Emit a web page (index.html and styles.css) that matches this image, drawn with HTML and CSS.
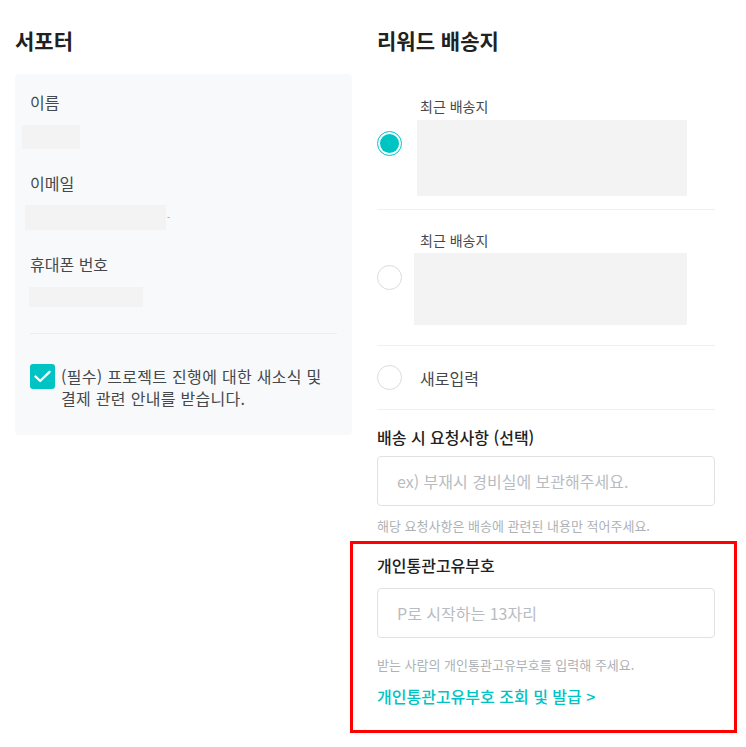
FILE: index.html
```html
<!DOCTYPE html>
<html lang="ko">
<head>
<meta charset="utf-8">
<link rel="stylesheet" href="styles.css">
</head>
<body>
<div class="page">
  <section class="col col-left">
    <h2 class="title">서포터</h2>
    <div class="info-box">
      <div class="field-label">이름</div>
      <div class="redact redact-name"></div>
      <div class="field-label gap">이메일</div>
      <div class="email-row"><div class="redact redact-email"></div><span class="tick">-</span></div>
      <div class="field-label gap">휴대폰 번호</div>
      <div class="redact redact-phone"></div>
      <hr class="divider">
      <label class="agree">
        <span class="checkbox">
          <svg width="17" height="13" viewBox="0 0 17 13"><path d="M1.5 6.5 L6.2 11 L15.5 1.8" fill="none" stroke="#fff" stroke-width="2.4" stroke-linecap="round" stroke-linejoin="round"/></svg>
        </span>
        <span class="agree-text">(필수) 프로젝트 진행에 대한 새소식 및<br>결제 관련 안내를 받습니다.</span>
      </label>
    </div>
  </section>

  <section class="col col-right">
    <h2 class="title">리워드 배송지</h2>
    <div class="addr-row row-1">
      <span class="radio checked"><span class="dot"></span></span>
      <div class="addr-content">
        <div class="addr-label">최근 배송지</div>
        <div class="redact redact-addr1"></div>
      </div>
    </div>
    <div class="addr-row row-2">
      <span class="radio"></span>
      <div class="addr-content">
        <div class="addr-label">최근 배송지</div>
        <div class="redact redact-addr2"></div>
      </div>
    </div>
    <div class="addr-row row-new">
      <span class="radio"></span>
      <span class="new-text">새로입력</span>
    </div>

    <div class="form-label req-label">배송 시 요청사항 (선택)</div>
    <div class="input"><span class="placeholder">ex) 부재시 경비실에 보관해주세요.</span></div>
    <div class="helper">해당 요청사항은 배송에 관련된 내용만 적어주세요.</div>

    <div class="customs">
      <div class="form-label">개인통관고유부호</div>
      <div class="input customs-input"><span class="placeholder">P로 시작하는 13자리</span></div>
      <div class="helper customs-helper">받는 사람의 개인통관고유부호를 입력해 주세요.</div>
      <a class="link">개인통관고유부호 조회 및 발급 &gt;</a>
    </div>
  </section>
</div>
</body>
</html>
```

FILE: styles.css
```css
* { box-sizing: border-box; }
html, body { margin: 0; padding: 0; background: #fff; }
body {
  font-family: "Noto Sans CJK KR", "Noto Sans", sans-serif;
  color: #44484b;
  width: 746px;
  height: 747px;
  overflow: hidden;
}
.page {
  display: flex;
  gap: 25px;
  padding: 26px 0 0 15px;
}
.col-left { width: 337px; }
.col-right { width: 338px; }

.title {
  margin: 0;
  font-size: 21px;
  line-height: 28px;
  font-weight: 700;
  color: #212121;
}

/* left */
.info-box {
  margin-top: 20px;
  background: #f8f9fb;
  border-radius: 4px;
  padding: 17px 15px 26px;
}
.field-label {
  font-size: 16px;
  line-height: 22px;
  color: #44484b;
}
.field-label.gap { margin-top: 23px; }
.redact { background: #f3f3f3; }
.redact-name { margin: 12px 0 0 -8px; width: 58px; height: 24px; }
.email-row { display: flex; align-items: center; margin: 11px 0 0 -5px; }
.redact-email { width: 141px; height: 25px; }
.tick { font-size: 9px; line-height: 10px; color: #90959a; margin-left: 1px; }
.redact-phone { margin: 12px 0 0 -1px; width: 114px; height: 20px; }
.divider {
  border: 0;
  border-top: 1px solid #eceef0;
  margin: 26px 0 0;
}
.agree {
  display: flex;
  align-items: flex-start;
  gap: 6px;
  margin-top: 30px;
}
.checkbox {
  flex: none;
  width: 25px;
  height: 25px;
  border-radius: 3px;
  background: #00c4c4;
  display: flex;
  align-items: center;
  justify-content: center;
}
.agree-text {
  margin-top: 1px;
  font-size: 16px;
  line-height: 22px;
  letter-spacing: 0.3px;
  color: #44484b;
}

/* right */
.addr-row {
  display: flex;
  align-items: center;
  border-bottom: 1px solid #f0f0f0;
}
.row-1 { margin-top: 22px; padding: 20px 0 13px; }
.row-1 .radio { margin-bottom: 6px; }
.row-2 { padding: 20px 0 20px; }
.row-new { height: 64px; }
.radio {
  flex: none;
  width: 25px;
  height: 25px;
  border-radius: 50%;
  border: 1px solid #dcdcdc;
  background: #fff;
  display: flex;
  align-items: center;
  justify-content: center;
}
.radio.checked { border-color: #00c4c4; }
.radio .dot {
  width: 19px;
  height: 19px;
  border-radius: 50%;
  background: #00c4c4;
}
.addr-content { margin-left: 18px; }
.addr-label {
  font-size: 14px;
  line-height: 20px;
  color: #44484b;
}
.redact-addr1 { margin: 4px 0 0 -3px; width: 270px; height: 76px; }
.redact-addr2 { margin: 3px 0 0 -6px; width: 273px; height: 72px; }
.new-text {
  margin-left: 18px;
  font-size: 16px;
  line-height: 22px;
  color: #44484b;
}

.form-label {
  font-size: 16px;
  line-height: 22px;
  font-weight: 500;
  color: #212121;
}
.req-label { margin-top: 16px; }
.input {
  margin-top: 8px;
  height: 50px;
  border: 1px solid #dfe2e5;
  border-radius: 4px;
  display: flex;
  align-items: center;
  padding-left: 19px;
}
.placeholder {
  font-size: 16px;
  color: #b8bcc0;
}
.helper {
  margin-top: 11px;
  font-size: 13px;
  line-height: 18px;
  color: #adb1b5;
}

.customs {
  margin: 6px -22px 0 -27px;
  border: 3px solid #ff0000;
  padding: 10px 19px 24px 24px;
}
.customs-input { margin-top: 12px; }
.customs-helper { margin-top: 18px; }
.link {
  display: block;
  margin-top: 12px;
  font-size: 16px;
  line-height: 20px;
  font-weight: 500;
  color: #00c4c4;
  text-decoration: none;
}
```
